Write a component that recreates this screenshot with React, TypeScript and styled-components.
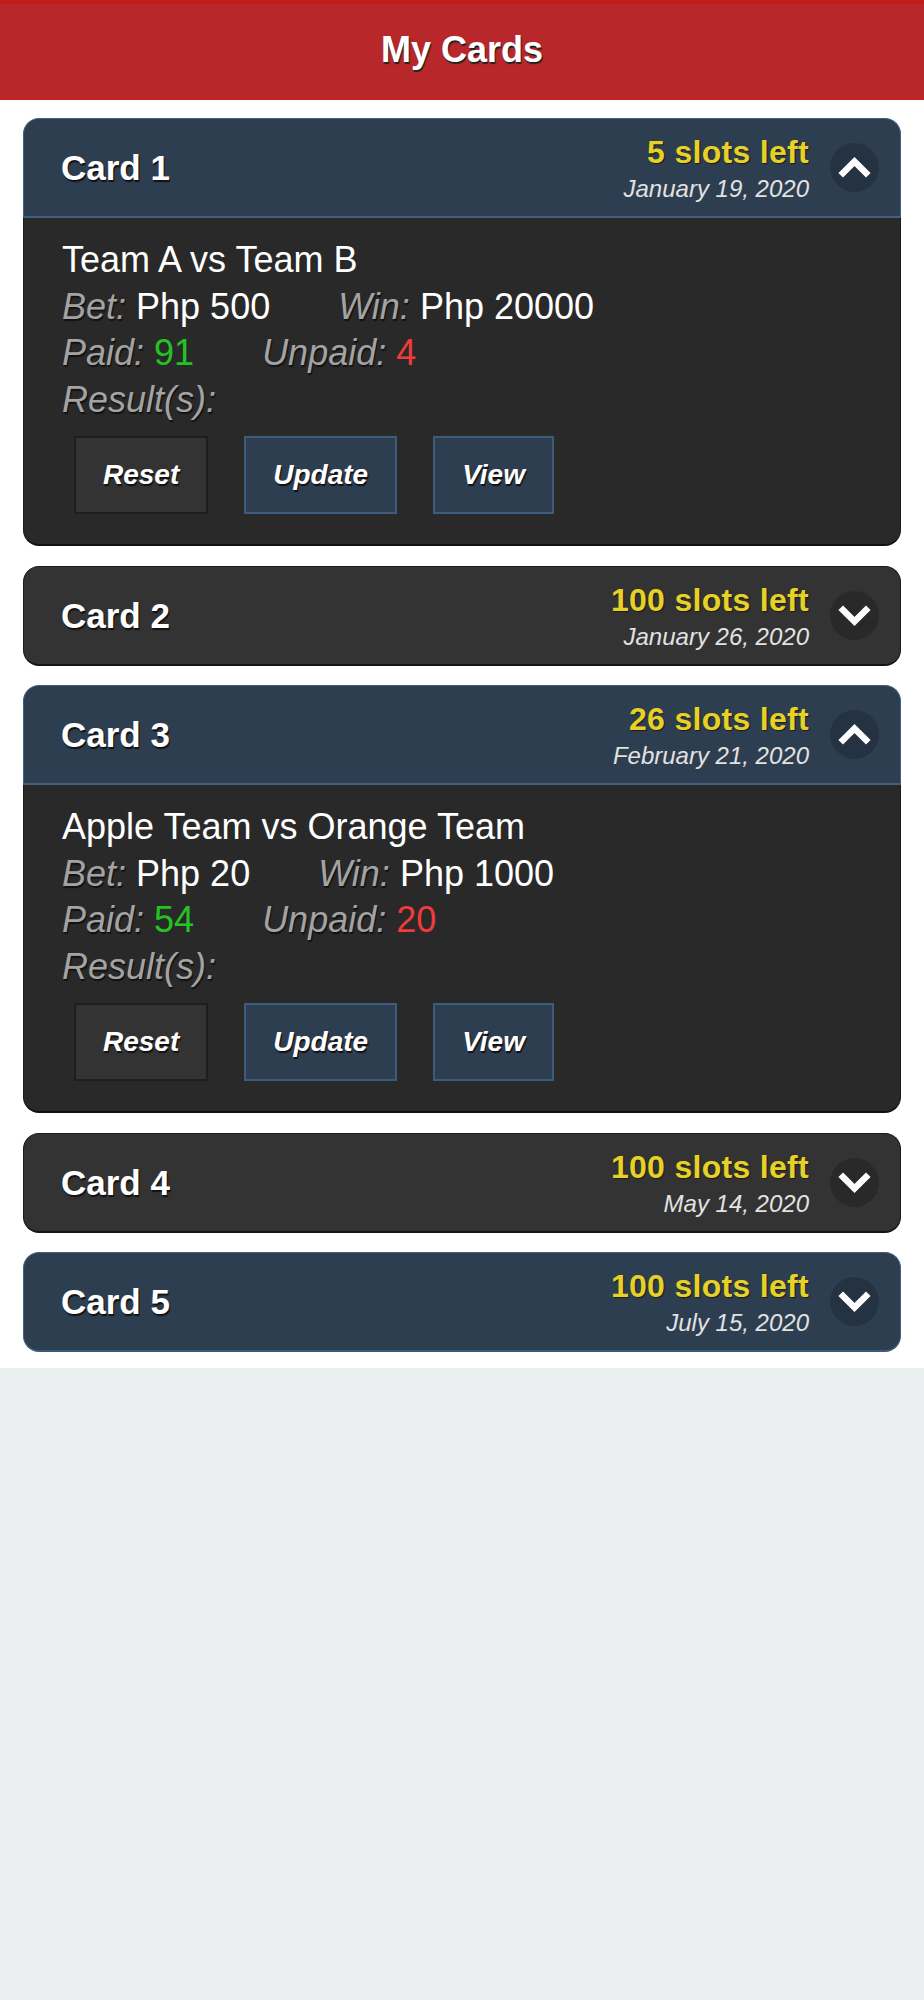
import React from "react";
import styled, { createGlobalStyle, css } from "styled-components";

const GlobalStyle = createGlobalStyle`
  html, body {
    margin: 0;
    padding: 0;
    background: #eaeeef;
    font-family: "Liberation Sans", Arial, Helvetica, sans-serif;
  }
  * { box-sizing: border-box; }
`;

const Page = styled.div`
  width: 924px;
`;

const TopBar = styled.header`
  height: 100px;
  background: #b8272a;
  border-top: 4px solid #c41a1c;
  border-bottom: 1px solid #d61b1b;
  display: flex;
  align-items: center;
  justify-content: center;
`;

const TopTitle = styled.h1`
  margin: 0;
  color: #fff;
  font-size: 36px;
  font-weight: bold;
  text-shadow: 1px 2px 1px #222;
  line-height: 1;
  padding-bottom: 4px;
`;

const Content = styled.main`
  background: #fff;
  padding: 18px 23px 16px;
  display: flex;
  flex-direction: column;
  gap: 19.5px;
`;

type Tone = "blue" | "dark";

const Card = styled.section`
  display: flex;
  flex-direction: column;
`;

const CardHeader = styled.div<{ $tone: Tone; $open: boolean }>`
  height: 100px;
  display: flex;
  align-items: center;
  padding: 0 21px 0 37px;
  border-radius: ${(p) => (p.$open ? "16px 16px 0 0" : "16px")};
  border: 1px solid;
  border-bottom-width: 2px;
  ${(p) =>
    p.$tone === "blue"
      ? css`
          background: #2e3e51;
          border-color: #44607d;
          border-bottom-color: ${p.$open ? "#42607f" : "#3d5a78"};
        `
      : css`
          background: #333333;
          border-color: #1a1a1a;
          border-bottom-color: #151515;
        `}
`;

const CardTitle = styled.h2`
  margin: 0;
  flex: 1;
  color: #fff;
  font-size: 35px;
  font-weight: bold;
  line-height: 1;
  text-shadow: 1px 2px 1px #111;
`;

const Info = styled.div`
  align-self: flex-start;
  margin-top: 14px;
  display: flex;
  flex-direction: column;
  align-items: flex-end;
`;

const Slots = styled.div`
  color: #e6d126;
  font-size: 32px;
  font-weight: bold;
  line-height: 38px;
  letter-spacing: 0.3px;
  text-shadow: 1px 1px 1px #1a1a1a;
`;

const DateText = styled.div`
  margin-top: 3px;
  color: #e2e2e2;
  font-size: 24px;
  font-style: italic;
  line-height: 30px;
`;

const Toggle = styled.div`
  width: 49px;
  height: 49px;
  margin-left: 21px;
  border-radius: 50%;
  background: rgba(0, 0, 0, 0.18);
  display: flex;
  align-items: center;
  justify-content: center;
`;

const CardBody = styled.div`
  background: #292929;
  border: 1px solid #1b1b1b;
  border-top: none;
  border-bottom: 2px solid #111;
  border-radius: 0 0 16px 16px;
  padding: 19px 38px 30px;
`;

const Line = styled.div`
  font-size: 36px;
  line-height: 46.5px;
  color: #fff;
  white-space: nowrap;
`;

const Pair = styled.span<{ $gap?: boolean }>`
  margin-left: ${(p) => (p.$gap ? "68px" : "0")};
`;

const Label = styled.span`
  color: #a3a3a3;
  font-style: italic;
  text-shadow: 1px 2px 1px #111;
`;

const Value = styled.span<{ $color?: string }>`
  color: ${(p) => p.$color || "#fff"};
`;

const Actions = styled.div`
  display: flex;
  gap: 36px;
  margin: 13px 0 0 12px;
`;

const Button = styled.button<{ $tone: Tone }>`
  height: 78px;
  padding: 0 27px;
  font-family: "Liberation Sans", Arial, Helvetica, sans-serif;
  font-size: 28px;
  font-weight: bold;
  font-style: italic;
  color: #fff;
  text-shadow: 1px 2px 1px #111;
  border: 2px solid;
  cursor: pointer;
  ${(p) =>
    p.$tone === "blue"
      ? css`
          background: #2e3e51;
          border-color: #3d5c7c;
        `
      : css`
          background: #333333;
          border-color: #1e1e1e;
        `}
`;

const Chevron: React.FC<{ up: boolean }> = ({ up }) => (
  <svg width="49" height="49" viewBox="0 0 49 49" style={{ display: "block" }}>
    <polyline
      points={up ? "13,30 24.5,18.5 36,30" : "13,19 24.5,30.5 36,19"}
      fill="none"
      stroke="#fff"
      strokeWidth="6.5"
      strokeLinecap="square"
      strokeLinejoin="miter"
    />
  </svg>
);

type CardData = {
  name: string;
  slots: number;
  date: string;
  tone: Tone;
  details?: {
    match: string;
    bet: string;
    win: string;
    paid: number;
    unpaid: number;
  };
};

const cards: CardData[] = [
  {
    name: "Card 1",
    slots: 5,
    date: "January 19, 2020",
    tone: "blue",
    details: { match: "Team A vs Team B", bet: "Php 500", win: "Php 20000", paid: 91, unpaid: 4 },
  },
  { name: "Card 2", slots: 100, date: "January 26, 2020", tone: "dark" },
  {
    name: "Card 3",
    slots: 26,
    date: "February 21, 2020",
    tone: "blue",
    details: { match: "Apple Team vs Orange Team", bet: "Php 20", win: "Php 1000", paid: 54, unpaid: 20 },
  },
  { name: "Card 4", slots: 100, date: "May 14, 2020", tone: "dark" },
  { name: "Card 5", slots: 100, date: "July 15, 2020", tone: "blue" },
];

export default function App() {
  return (
    <Page>
      <GlobalStyle />
      <TopBar>
        <TopTitle>My Cards</TopTitle>
      </TopBar>
      <Content>
        {cards.map((c) => {
          const open = !!c.details;
          return (
            <Card key={c.name}>
              <CardHeader $tone={c.tone} $open={open}>
                <CardTitle>{c.name}</CardTitle>
                <Info>
                  <Slots>{c.slots} slots left</Slots>
                  <DateText>{c.date}</DateText>
                </Info>
                <Toggle>
                  <Chevron up={open} />
                </Toggle>
              </CardHeader>
              {c.details && (
                <CardBody>
                  <Line>{c.details.match}</Line>
                  <Line>
                    <Pair>
                      <Label>Bet:</Label> <Value>{c.details.bet}</Value>
                    </Pair>
                    <Pair $gap>
                      <Label>Win:</Label> <Value>{c.details.win}</Value>
                    </Pair>
                  </Line>
                  <Line>
                    <Pair>
                      <Label>Paid:</Label> <Value $color="#22c322">{c.details.paid}</Value>
                    </Pair>
                    <Pair $gap>
                      <Label>Unpaid:</Label> <Value $color="#ee3b3b">{c.details.unpaid}</Value>
                    </Pair>
                  </Line>
                  <Line>
                    <Label>Result(s):</Label>
                  </Line>
                  <Actions>
                    <Button $tone="dark">Reset</Button>
                    <Button $tone="blue">Update</Button>
                    <Button $tone="blue">View</Button>
                  </Actions>
                </CardBody>
              )}
            </Card>
          );
        })}
      </Content>
    </Page>
  );
}
